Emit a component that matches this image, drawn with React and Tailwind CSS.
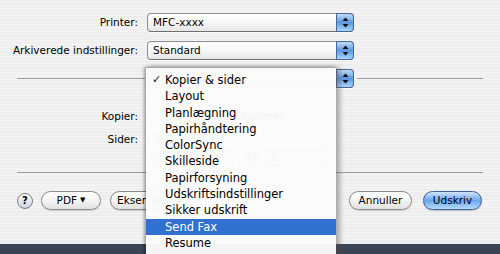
import React from "react";

function Arrows() {
  return (
    <svg width="7" height="11" viewBox="0 0 7 11">
      <path d="M3.5 0.5 L6.5 4 L0.5 4 Z" fill="#111" />
      <path d="M0.5 7 L6.5 7 L3.5 10.5 Z" fill="#111" />
    </svg>
  );
}

function Popup({ text }) {
  return (
    <div className="flex h-[19px] w-[207px] rounded-[4px] border border-[#8e8e8e] border-b-[#6f6f6f] bg-gradient-to-b from-white via-[#f7f7f7] to-[#e6e6e6] shadow-[0_1px_0_rgba(255,255,255,0.8)]">
      <span className="flex-1 pl-[5px] leading-[17px]">{text}</span>
      <div className="w-[18px] -my-px -mr-px rounded-r-[4px] border border-[#46679c] bg-gradient-to-b from-[#c3dcf8] via-[#5d97e2] to-[#a9d6fb] flex items-center justify-center">
        <Arrows />
      </div>
    </div>
  );
}

function Pill({ children, className = "" }) {
  return (
    <div
      className={
        "h-[19px] rounded-full border border-[#8a8a8a] bg-gradient-to-b from-white via-[#f4f4f4] to-[#e2e2e2] flex items-center justify-center whitespace-nowrap overflow-hidden shadow-[0_1px_1px_rgba(0,0,0,0.15)] " +
        className
      }
    >
      {children}
    </div>
  );
}

const items = [
  "Kopier & sider",
  "Layout",
  "Planlægning",
  "Papirhåndtering",
  "ColorSync",
  "Skilleside",
  "Papirforsyning",
  "Udskriftsindstillinger",
  "Sikker udskrift",
  "Send Fax",
  "Resume",
];

export default function App() {
  return (
    <div className="relative w-[500px] h-[254px] overflow-hidden flex flex-col text-[10.5px] text-black font-['DejaVu_Sans',sans-serif] bg-[image:repeating-linear-gradient(180deg,#ededed_0px,#ededed_1.6px,#f3f3f3_1.6px,#f3f3f3_3.2px)]">
      {/* Printer row */}
      <div className="mt-[13px] flex items-center h-[19px]">
        <div className="w-[138px] text-right">Printer:</div>
        <div className="ml-[9px]">
          <Popup text="MFC-xxxx" />
        </div>
      </div>
      {/* Presets row */}
      <div className="mt-[9px] flex items-center h-[19px]">
        <div className="w-[138px] text-right">Arkiverede indstillinger:</div>
        <div className="ml-[9px]">
          <Popup text="Standard" />
        </div>
      </div>
      {/* Panel popup row (its face is covered by the open menu) */}
      <div className="mt-[9px] flex items-center h-[19px] pl-[17px] pr-[17px]">
        <div className="w-[128px] h-px bg-[#9c9c9c]" />
        <div className="ml-[2px]">
          <Popup text="" />
        </div>
        <div className="ml-[3px] flex-1 h-px bg-[#9c9c9c]" />
      </div>
      {/* Kopier row */}
      <div className="mt-[20px] flex items-center h-[18px]">
        <div className="w-[138px] text-right">Kopier:</div>
        <div className="ml-[9px] w-[30px] h-[16px] border border-[#9a9a9a] bg-white" />
        <div className="ml-[48px] flex items-center gap-[4px]">
          <div className="w-[12px] h-[12px] rounded-[2px] border border-[#7a7a7a] bg-white" />
          <span>Sorteret</span>
        </div>
      </div>
      {/* Sider row */}
      <div className="mt-[5px] flex items-center h-[18px]">
        <div className="w-[138px] text-right">Sider:</div>
        <div className="ml-[9px] flex items-center gap-[4px]">
          <div className="w-[12px] h-[12px] rounded-full border border-[#7a7a7a] bg-[#dfe8f5]" />
        </div>
      </div>
      <div className="flex items-center h-[17px]">
        <div className="ml-[147px] flex items-center gap-[4px]">
          <div className="w-[12px] h-[12px] rounded-full border border-[#7a7a7a] bg-white" />
          <div className="ml-[30px] w-[40px] h-[15px] border border-[#9a9a9a] bg-white" />
        </div>
        <span className="ml-[14px]">til:</span>
        <div className="ml-[5px] w-[62px] h-[15px] border border-[#9a9a9a] bg-white pl-[4px] leading-[13px]">1</div>
      </div>
      {/* bottom separator */}
      <div className="mt-[6px] mx-[17px] h-px bg-[#9c9c9c]" />
      {/* buttons */}
      <div className="mt-[18px] flex items-center h-[19px] pl-[17px] pr-[18px]">
        <div className="w-[16px] h-[16px] rounded-full border border-[#7d7d7d] bg-gradient-to-b from-white to-[#c9d3e2] flex items-center justify-center font-bold text-[10px] leading-none">
          ?
        </div>
        <Pill className="ml-[8px] w-[60px]">
          <span>PDF</span>
          <span className="ml-[3px] text-[7px]">▼</span>
        </Pill>
        <Pill className="ml-[9px] w-[72px] justify-start pl-[6px]">
          <span>Eksempel</span>
        </Pill>
        <div className="flex-1" />
        <Pill className="w-[63px]">
          <span>Annuller</span>
        </Pill>
        <div className="ml-[11px] w-[59px] h-[19px] rounded-full border border-[#3d5f95] bg-gradient-to-b from-[#cfe4fb] via-[#6aa6ec] to-[#b5dcfc] flex items-center justify-center shadow-[0_1px_1px_rgba(0,0,0,0.2)]">
          <span>Udskriv</span>
        </div>
      </div>
      <div className="flex-1" />
      <div className="h-[10px] bg-[#3b4455]" />

      {/* open popup menu */}
      <div className="absolute left-[146px] top-[67px] w-[190px] bottom-0 bg-[#fbfbfb]/[0.97] border-t border-[#a8a8a8] pt-[4px] text-[11.5px] shadow-[4px_0_5px_rgba(90,80,70,0.45),-2px_0_3px_rgba(0,0,0,0.35)]">
        {items.map((t, i) => (
          <div
            key={t}
            className={
              "relative h-[16.3px] leading-[16.3px] pl-[19px] whitespace-nowrap " +
              (t === "Send Fax" ? "bg-[#3270d0] text-white" : "text-black")
            }
          >
            {i === 0 && (
              <span className="absolute left-[6px] top-0 text-[11px] text-[#222]">✓</span>
            )}
            {t}
          </div>
        ))}
      </div>
    </div>
  );
}
